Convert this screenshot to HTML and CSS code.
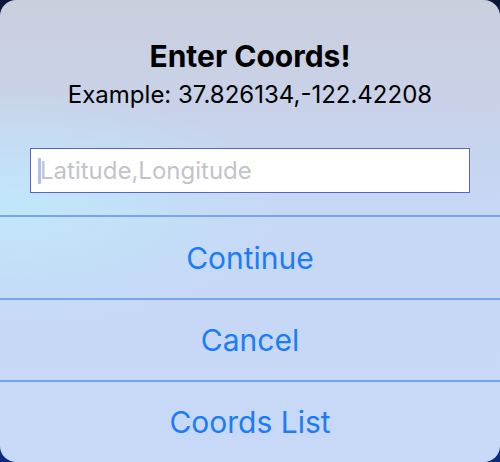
FILE: index.html
```html
<!DOCTYPE html>
<html lang="en">
<head>
    <meta charset="UTF-8">
    <meta name="viewport" content="width=device-width, initial-scale=1.0">
    <title>Enter Coords</title>

    <link rel="stylesheet" href="styles.css">
</head>
<body>
    <div class="alert">
        <div class="alert-head">
            <p class="title">Enter Coords!</p>
            <p class="message">Example: 37.826134,-122.42208</p>
            <div class="field">
                <span class="caret"></span>
                <span class="placeholder">Latitude,Longitude</span>
            </div>
        </div>
        <button class="alert-button">Continue</button>
        <button class="alert-button">Cancel</button>
        <button class="alert-button last">Coords List</button>
    </div>
</body>
</html>
```

FILE: styles.css
```css
html, body{
    margin: 0;
    height: 100%;
}
body{
    background: linear-gradient(#0b1836, #0a2b80);
    font-family: Inter, "Liberation Sans", Arial, sans-serif;
}
.alert{
    height: 462px;
    border-radius: 16px;
    overflow: hidden;
    display: flex;
    flex-direction: column;
    background:
        radial-gradient(ellipse 260px 120px at 20px 205px, rgba(192, 232, 250, 0.9), rgba(192, 232, 250, 0)),
        linear-gradient(#cacfdd 0px, #c8d2ea 120px, #c6d8f6 215px, #c8d8f7 462px);
}
.alert-head{
    height: 215px;
    box-sizing: border-box;
    padding-top: 38px;
    text-align: center;
}
.title{
    margin: 0;
    font-size: 30px;
    line-height: 36px;
    font-weight: bold;
    color: #000;
}
.message{
    margin: 6px 0 0 0;
    font-size: 24px;
    line-height: 30px;
    color: #000;
}
.field{
    margin: 38px 30px 0 30px;
    height: 45px;
    box-sizing: border-box;
    border: 1px solid #5a62d2;
    background: #fff;
    display: flex;
    align-items: center;
    padding-left: 7px;
}
.caret{
    width: 3px;
    height: 26px;
    background: #a9c2f2;
    border-radius: 1px;
}
.placeholder{
    font-size: 24px;
    color: #c3c3cb;
    margin-left: -1px;
}
.alert-button{
    height: 83px;
    border: none;
    border-top: 2px solid #79a5ec;
    background: transparent;
    font-family: inherit;
    font-size: 30px;
    color: #1a7cf8;
    padding: 0;
    cursor: pointer;
}
.alert-button + .alert-button{
    height: 82px;
}
```
